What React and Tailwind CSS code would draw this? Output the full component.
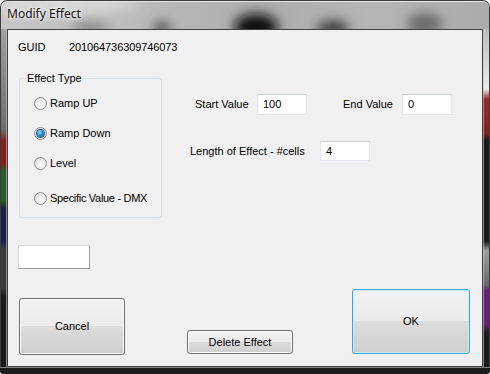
import React from "react";

const ui = "font-['Liberation_Sans',Arial,sans-serif] text-[11px] leading-[13px] text-[#000]";

const Radio = ({ label, checked }) => (
  <div className="flex items-center h-[13px]">
    <span className="relative w-[13px] h-[13px] rounded-full border border-[#8e8f8f] bg-[radial-gradient(circle_at_50%_60%,#ffffff_0%,#e6e6e6_60%,#cfcfcf_100%)] flex items-center justify-center shrink-0">
      {checked && (
        <span className="w-[7px] h-[7px] rounded-full bg-[radial-gradient(circle_at_40%_35%,#8fdcfb_0%,#2d8fd0_45%,#0d3f73_100%)] shadow-[0_0_0_1px_#2a5f8f]" />
      )}
    </span>
    <span className="ml-[3px] whitespace-nowrap">{label}</span>
  </div>
);

const Field = ({ value, h = "h-[21px]" }) => (
  <div
    className={`w-[50px] ${h} bg-white border border-[#e2e6ec] border-t-[#c9cdd4] flex items-center pl-[5px] shrink-0`}
  >
    {value}
  </div>
);

const btn =
  "rounded-[3px] border bg-[linear-gradient(to_bottom,#f2f2f2_0%,#ebebeb_50%,#dddddd_50%,#cfcfcf_100%)] flex items-center justify-center shrink-0";

const Titlebar = () => (
  <div className="relative h-[29px] overflow-hidden rounded-t-[7px] bg-[linear-gradient(to_right,#c6c6c6_0%,#bababa_30%,#acacac_55%,#b6b6b6_75%,#ababab_100%)]">
    <svg className="absolute inset-0" width="490" height="29">
      <defs>
        <filter id="blur" x="-50%" y="-50%" width="200%" height="200%">
          <feGaussianBlur stdDeviation="6" />
        </filter>
      </defs>
      <g filter="url(#blur)">
        <ellipse cx="256" cy="27" rx="22" ry="13" fill="#111" />
        <ellipse cx="162" cy="28" rx="9" ry="6" fill="#444" />
        <ellipse cx="333" cy="28" rx="16" ry="7" fill="#333" />
        <ellipse cx="425" cy="24" rx="18" ry="11" fill="#6a6a6a" />
        <ellipse cx="90" cy="28" rx="18" ry="5" fill="#7a7a7a" />
        <ellipse cx="60" cy="4" rx="80" ry="8" fill="#dcdcdc" />
      </g>
    </svg>
    <div className="absolute inset-0 rounded-t-[7px] border border-b-0 border-[#3c3c3c] shadow-[inset_0_1px_0_#e8e8e8]" />
    <div className="relative pl-[7px] pt-[6px] font-['Noto_Sans',sans-serif] text-[12px] leading-[16px] text-[#111] [text-shadow:0_0_6px_#ffffff,0_0_3px_#ffffff]">
      Modify Effect
    </div>
  </div>
);

export default function App() {
  return (
    <div className={`w-[490px] h-[374px] flex flex-col ${ui}`}>
      <Titlebar />
      <div className="flex h-[338px]">
        <div className="w-[7px] border-l border-[#3c3c3c] border-r border-r-[#c8c8c8]/60 bg-[linear-gradient(to_bottom,#a0a0a0_0px,#6e6e6e_100px,#8a1c1c_112px,#8a1c1c_134px,#2a5a2a_142px,#2a5a2a_172px,#1e1e4a_180px,#1e1e4a_212px,#3a3a3a_220px,#3a3a3a_258px,#1a1a1a_268px)]" />
        <div className="w-[476px] h-full bg-[#f0f0f0] border border-[#404040] flex flex-col">
          <div className="flex mt-[11px] ml-[10px]">
            <span className="w-[51px]">GUID</span>
            <span className="tracking-[-0.1px]">201064736309746073</span>
          </div>

          <div className="flex mt-[24px]">
            <div className="relative ml-[11px] w-[143px] h-[140px] rounded-[3px] border border-[#d5dfe5] shrink-0">
              <span className="absolute -top-[7px] left-[6px] px-[1px] bg-[#f0f0f0]">Effect Type</span>
              <div className="flex flex-col ml-[14px] mt-[18px]">
                <Radio label="Ramp UP" />
                <div className="mt-[17px]">
                  <Radio label="Ramp Down" checked />
                </div>
                <div className="mt-[17px]">
                  <Radio label="Level" />
                </div>
                <div className="mt-[22px] tracking-[-0.3px]">
                  <Radio label="Specific Value - DMX" />
                </div>
              </div>
            </div>

            <div className="flex flex-col ml-[28px] mt-[16px]">
              <div className="flex items-center ml-[5px]">
                <span className="w-[62px]">Start Value</span>
                <Field value="100" />
                <span className="ml-[36px] w-[59px]">End Value</span>
                <Field value="0" />
              </div>
              <div className="flex items-center mt-[26px]">
                <span className="w-[130px]">Length of Effect - #cells</span>
                <Field value="4" h="h-[20px]" />
              </div>
            </div>
          </div>

          <div className="ml-[10px] mt-[27px] w-[72px] h-[24px] bg-white border border-[#dcdcdc] border-r-[#a0a0a0] border-b-[#a0a0a0]" />

          <div className="flex mt-[20px]">
            <div className={`${btn} ml-[11px] mt-[9px] w-[106px] h-[57px] border-[#707070] shadow-[inset_0_0_0_1px_#fbfbfb]`}>
              Cancel
            </div>
            <div className={`${btn} ml-[62px] mt-[41px] w-[106px] h-[24px] border-[#707070] shadow-[inset_0_0_0_1px_#fbfbfb]`}>
              Delete Effect
            </div>
            <div className={`${btn} ml-[59px] w-[118px] h-[65px] border-[#3aa9e2] shadow-[inset_0_0_0_1px_#c9e8f8]`}>
              OK
            </div>
          </div>
        </div>
        <div className="w-[7px] border-r border-[#3c3c3c] border-l border-l-[#c8c8c8]/60 bg-[linear-gradient(to_bottom,#bdbdbd_0px,#ececec_60px,#9a2a2a_70px,#8a2020_104px,#1a1a1a_112px,#1a1a1a_212px,#a0a0a0_222px,#6a6a6a_255px,#6a207a_262px,#6a207a_295px,#1a1a1a_305px)]" />
      </div>
      <div className="h-[7px] bg-[#1c1c1c] border-t border-[#c8c8c8]/60 rounded-b-[3px]" />
    </div>
  );
}
